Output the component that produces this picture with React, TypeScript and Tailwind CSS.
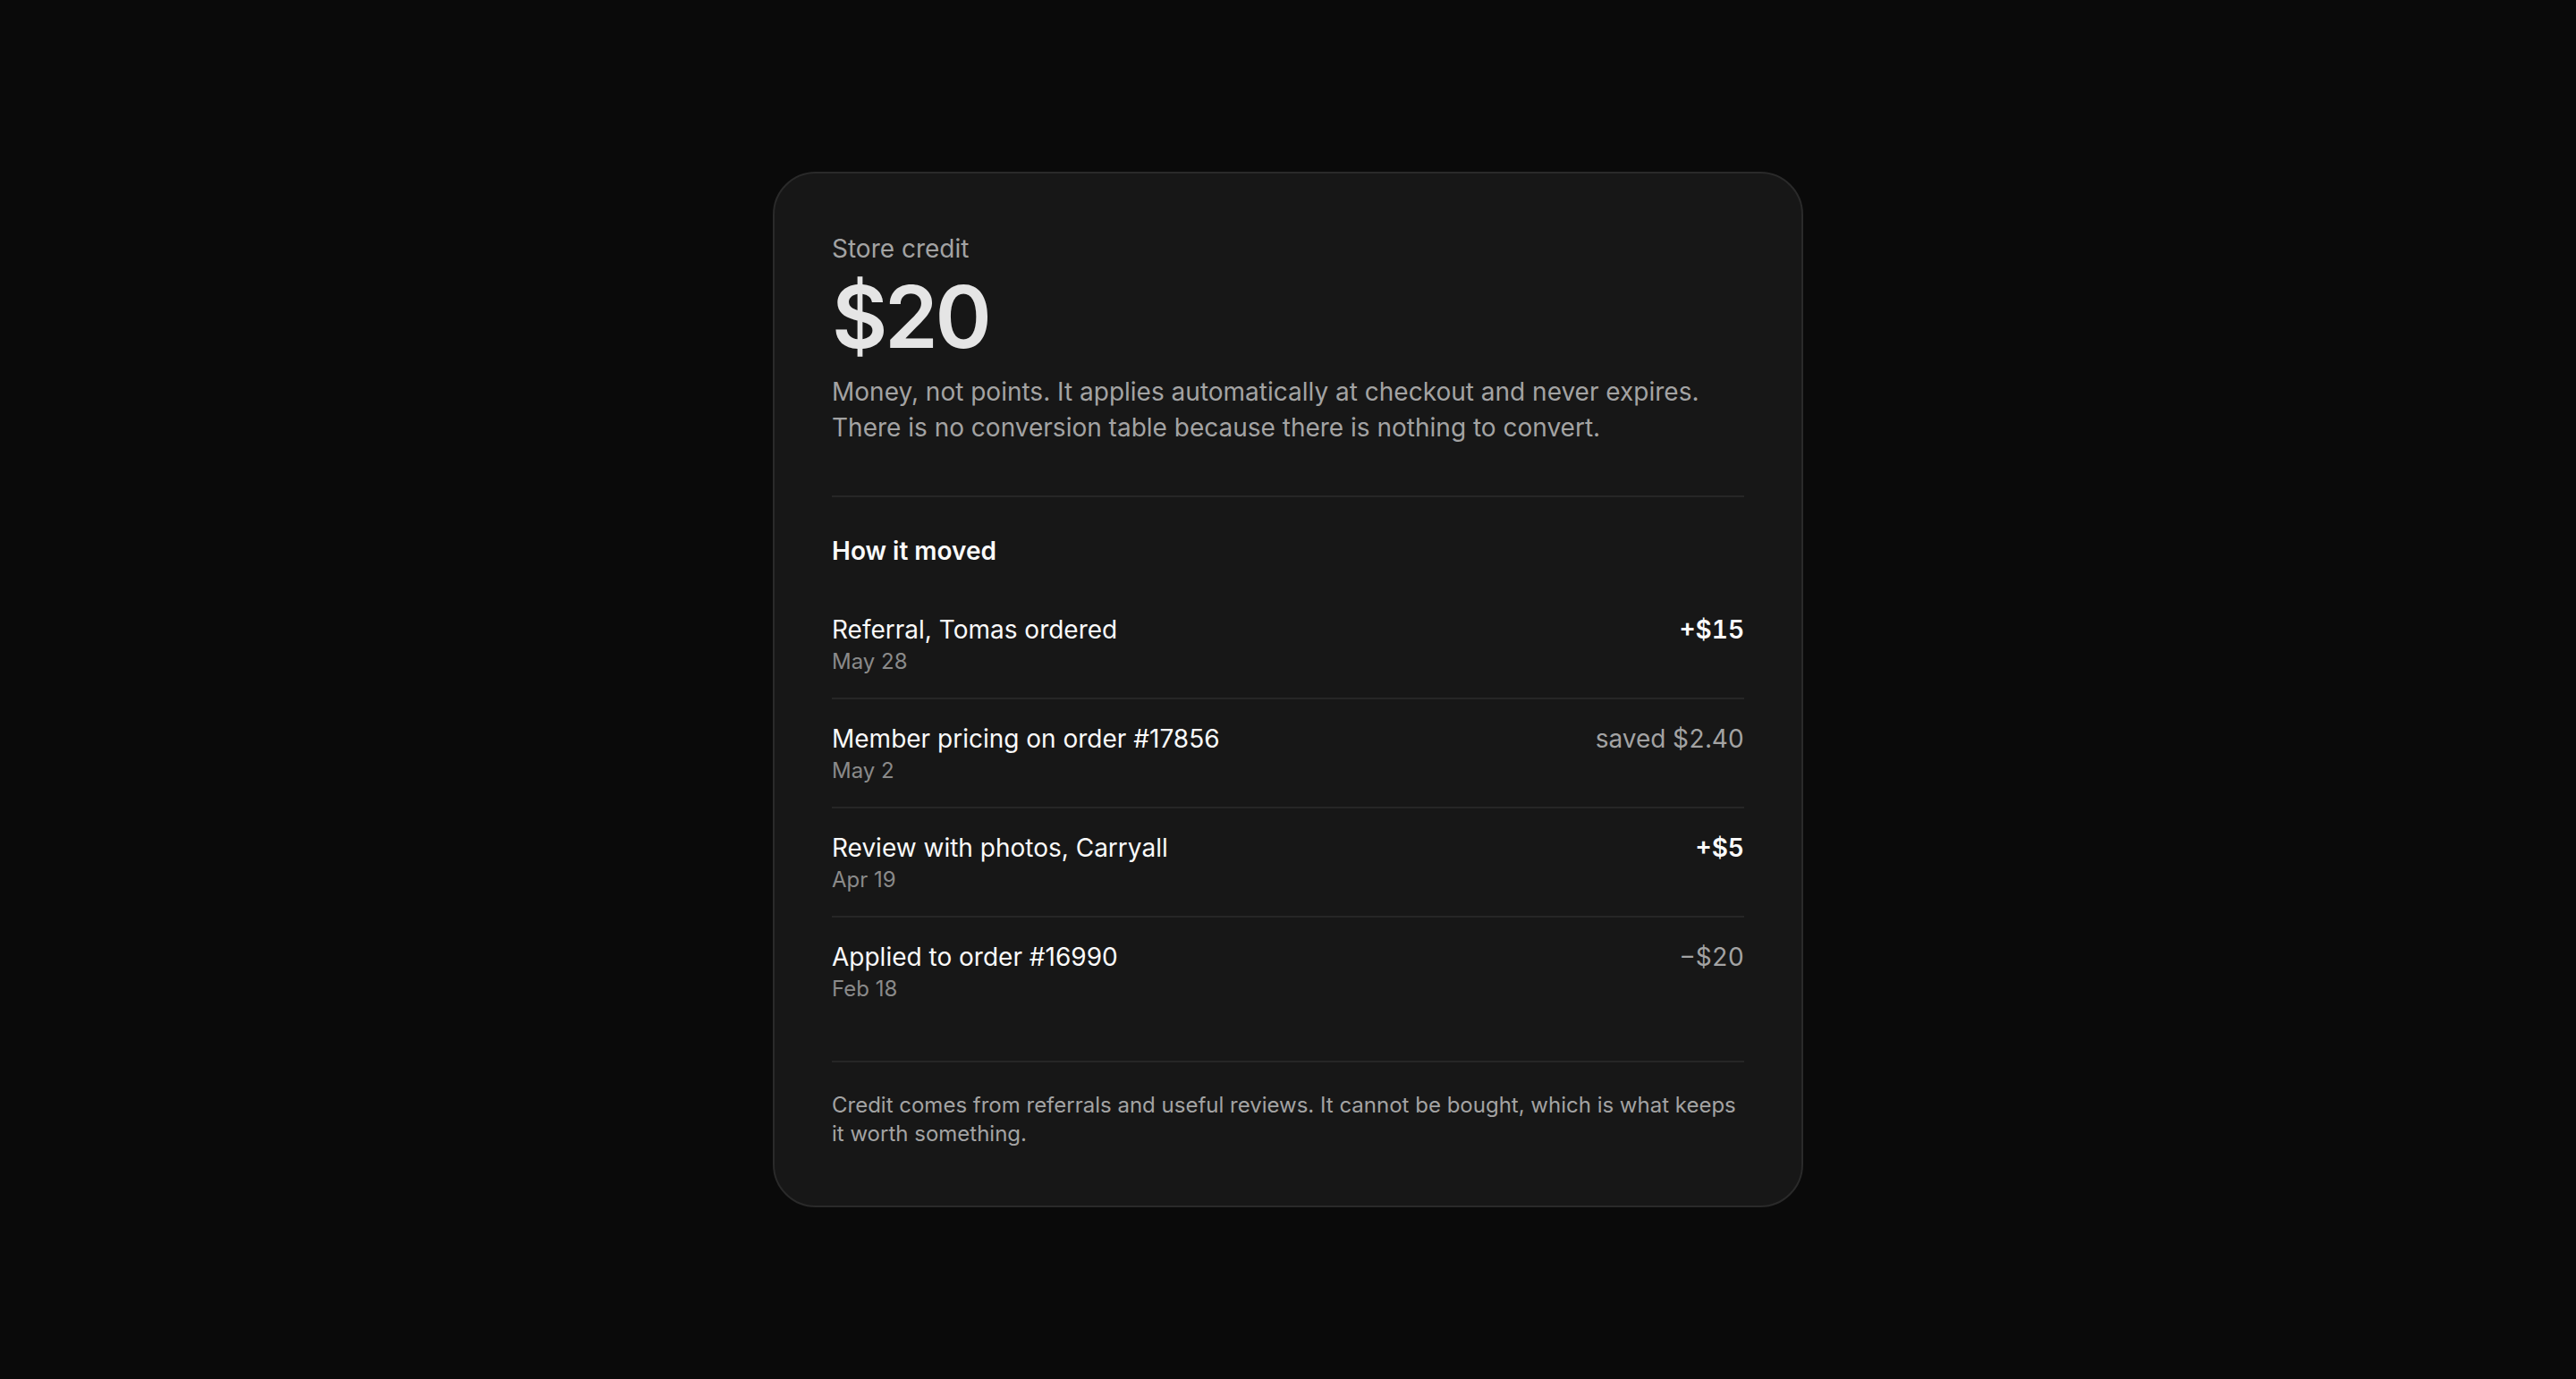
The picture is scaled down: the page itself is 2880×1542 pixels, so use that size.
type Entry = {
  title: string;
  date: string;
  amount: string;
  credit: boolean;
};

const entries: Entry[] = [
  { title: 'Referral, Tomas ordered', date: 'May 28', amount: '+$15', credit: true },
  { title: 'Member pricing on order #17856', date: 'May 2', amount: 'saved $2.40', credit: false },
  { title: 'Review with photos, Carryall', date: 'Apr 19', amount: '+$5', credit: true },
  { title: 'Applied to order #16990', date: 'Feb 18', amount: '\u2212$20', credit: false },
];

function App() {
  return (
    <div
      className="min-h-screen bg-[#0a0a0a] flex items-center justify-center"
      style={{ fontFamily: 'Inter, "Noto Sans", sans-serif' }}
    >
      <div className="w-[1152px] rounded-[48px] border-2 border-[#2a2a2a] bg-[#171717] p-[64px]">
        <p className="text-[28px] leading-[40px] text-[#a3a3a3]">Store credit</p>
        <h1 className="mt-2 text-[96px] leading-none font-semibold tracking-[-0.035em] text-[#e5e5e5]">$20</h1>
        <p className="mt-4 text-[28px] leading-[40px] text-[#a3a3a3]">
          Money, not points. It applies automatically at checkout and never expires. There is no
          conversion table because there is nothing to convert.
        </p>

        <div className="mt-[56px] border-t-2 border-[#262626] pt-[40px]">
          <h2 className="mb-6 text-[28px] leading-[40px] font-semibold text-[#fafafa]">How it moved</h2>
          <ul>
            {entries.map((e) => (
              <li
                key={e.title}
                className="flex items-start justify-between py-6 border-b-2 border-[#262626] last:border-b-0"
              >
                <div>
                  <div className="text-[28px] leading-[40px] text-[#fafafa]">{e.title}</div>
                  <div className="text-[24px] leading-[32px] text-[#8a8a8a]">{e.date}</div>
                </div>
                <div
                  className={
                    e.credit
                      ? 'text-[28px] leading-[40px] font-semibold tabular-nums text-[#fafafa]'
                      : 'text-[28px] leading-[40px] tabular-nums text-[#a3a3a3]'
                  }
                >
                  {e.amount}
                </div>
              </li>
            ))}
          </ul>
        </div>

        <div className="mt-10 border-t-2 border-[#262626] pt-8">
          <p className="text-[24px] leading-[32px] text-[#a3a3a3]">
            Credit comes from referrals and useful reviews. It cannot be bought, which is what keeps
            it worth something.
          </p>
        </div>
      </div>
    </div>
  );
}

export default App;
